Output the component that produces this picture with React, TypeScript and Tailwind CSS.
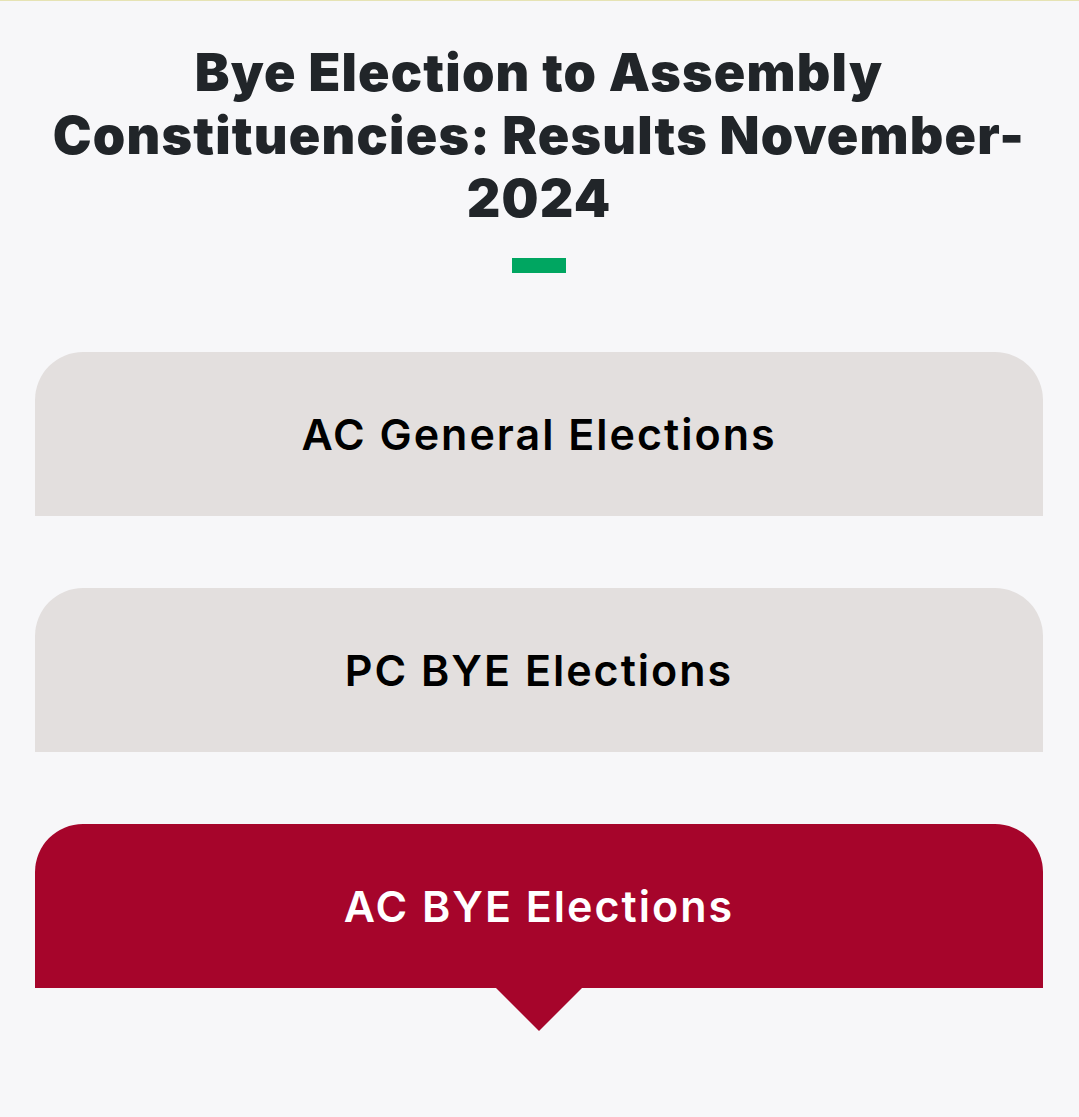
import React from "react";

const tabs = [
  { id: 1, label: "AC General Elections" },
  { id: 2, label: "PC BYE Elections" },
  { id: 3, label: "AC BYE Elections" },
];

export default function App() {
  const active = 3;
  return (
    <div
      className="min-h-[1117px] w-full bg-[#f7f7f9] border-t border-[#e6e3b4] pl-[35px] pr-[36px]"
      style={{ fontFamily: "Inter, 'Open Sans', sans-serif" }}
    >
      <h1 className="pt-[40px] text-center text-[52px] leading-[63px] font-black tracking-[1.2px] text-[#212529]">
        Bye Election to Assembly
        <br />
        Constituencies: Results November-
        <br />
        2024
      </h1>
      <div className="flex justify-center mt-[28px]">
        <div className="w-[54px] h-[15px] bg-[#00a661]" />
      </div>
      <div className="mt-[79px] flex flex-col gap-[72px]">
        {tabs.map((t) => (
          <div key={t.id} className="relative">
            <div
              className={
                t.id === active
                  ? "h-[164px] rounded-t-[48px] bg-[#a6052b] flex items-center justify-center"
                  : "h-[164px] rounded-t-[48px] bg-[#e3dfde] flex items-center justify-center"
              }
            >
              <span
                className={
                  t.id === active
                    ? "text-[43px] font-semibold text-white tracking-[2px]"
                    : "text-[43px] font-semibold text-black tracking-[2px]"
                }
              >
                {t.label}
              </span>
            </div>
            {t.id === active && (
              <div className="absolute left-1/2 -translate-x-1/2 top-[164px] w-0 h-0 border-l-[43px] border-r-[43px] border-t-[43px] border-l-transparent border-r-transparent border-t-[#a6052b]" />
            )}
          </div>
        ))}
      </div>
    </div>
  );
}
